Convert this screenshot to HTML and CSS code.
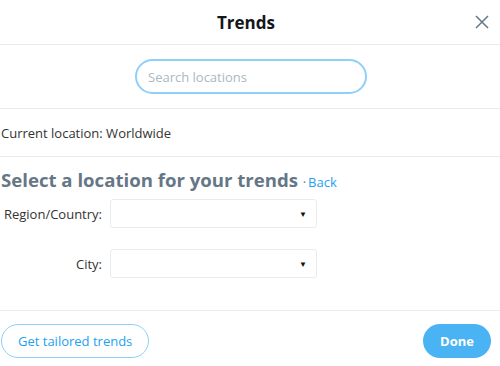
FILE: index.html
```html
<!DOCTYPE html>
<html lang="en">

<head>
  <meta charset="UTF-8">
  <meta name="viewport" content="width=device-width, initial-scale=1.0">
  <title>Trends</title>
  <link rel="stylesheet" href="styles.css">
</head>

<body>
  <div class="modal">
    <div class="modal_header">
      <h3 class="modal_title">Trends</h3>
      <button class="close_btn" type="button" aria-label="Close">
        <svg width="14" height="14" viewBox="0 0 14 14">
          <path d="M1 1 L13 13 M13 1 L1 13" stroke="#657786" stroke-width="1.5" fill="none" />
        </svg>
      </button>
    </div>
    <div class="search_box">
      <input class="search_input" type="text" placeholder="Search locations">
    </div>
    <div class="current">Current location: Worldwide</div>
    <div class="select_area">
      <h2 class="select_title">Select a location for your trends <span class="dot">·</span> <a href="#" class="back">Back</a></h2>
      <div class="field">
        <label class="field_label">Region/Country:</label>
        <div class="dropdown"><span class="arrow">&#9660;</span></div>
      </div>
      <div class="field">
        <label class="field_label">City:</label>
        <div class="dropdown"><span class="arrow">&#9660;</span></div>
      </div>
    </div>
    <div class="modal_footer">
      <button class="tailored_btn" type="button">Get tailored trends</button>
      <button class="done_btn" type="button">Done</button>
    </div>
  </div>
</body>

</html>
```

FILE: styles.css
```css
/* 기본 스타일 */
body {
  margin: 0;
  padding: 0;
  background-color: #fff;
  font-family: "Open Sans", "Noto Sans", sans-serif;
  color: #14171a;
}

.modal {
  width: 500px;
  height: 366px;
  display: flex;
  flex-direction: column;
}

/* 헤더 */
.modal_header {
  height: 44px;
  border-bottom: 1px solid #e6ecf0;
  display: flex;
  align-items: center;
  justify-content: center;
  position: relative;
}

.modal_title {
  margin: 0;
  font-size: 17px;
  font-weight: bold;
  margin-left: -8px;
}

.close_btn {
  position: absolute;
  right: 11px;
  top: 15px;
  background: none;
  border: none;
  padding: 0;
  cursor: pointer;
  line-height: 0;
}

/* 검색 */
.search_box {
  height: 63px;
  border-bottom: 1px solid #e6ecf0;
  display: flex;
  align-items: center;
  justify-content: center;
}

.search_input {
  width: 232px;
  height: 35px;
  box-sizing: border-box;
  border: 2px solid #8ed0f9;
  border-radius: 18px;
  padding: 0 11px;
  font-family: inherit;
  font-size: 13px;
  color: #14171a;
  margin-left: 2px;
  outline: none;
}

.search_input::placeholder {
  color: #aab8c2;
}

.current {
  height: 47px;
  border-bottom: 1px solid #e6ecf0;
  display: flex;
  align-items: center;
  padding-left: 1px;
  font-size: 13px;
  color: #333;
}

/* 위치 선택 */
.select_area {
  padding: 10px 0 0 1px;
  flex: 1;
  border-bottom: 1px solid #e6ecf0;
}

.select_title {
  margin: 0 0 7px;
  font-size: 18.6px;
  font-weight: bold;
  color: #657786;
}

.select_title .dot {
  font-size: 13px;
  font-weight: normal;
  color: #657786;
}

.back {
  font-size: 13px;
  font-weight: normal;
  color: #1da1f2;
  text-decoration: none;
  margin-left: -3px;
}

.field {
  display: flex;
  align-items: center;
  margin-bottom: 21px;
}

.field_label {
  width: 101px;
  text-align: right;
  font-size: 13px;
  color: #333;
  margin-right: 8px;
}

.dropdown {
  width: 207px;
  height: 29px;
  box-sizing: border-box;
  border: 1px solid #e6ecf0;
  border-radius: 3px;
  display: flex;
  align-items: center;
  justify-content: flex-end;
  padding-right: 9px;
}

.arrow {
  font-size: 8px;
  color: #111;
}

/* 하단 버튼 */
.modal_footer {
  height: 55px;
  display: flex;
  align-items: center;
  justify-content: space-between;
  padding: 0 9px 0 1px;
}

.tailored_btn {
  height: 34px;
  padding: 0 16px;
  background-color: #fff;
  border: 1px solid #8ed0f9;
  border-radius: 17px;
  color: #1da1f2;
  font-family: inherit;
  font-size: 13px;
  margin-top: 4px;
}

.done_btn {
  height: 34px;
  width: 68px;
  background-color: #4ab3f4;
  border: none;
  border-radius: 17px;
  color: #fff;
  font-family: inherit;
  font-size: 13px;
  font-weight: bold;
  margin-top: 4px;
}
```
